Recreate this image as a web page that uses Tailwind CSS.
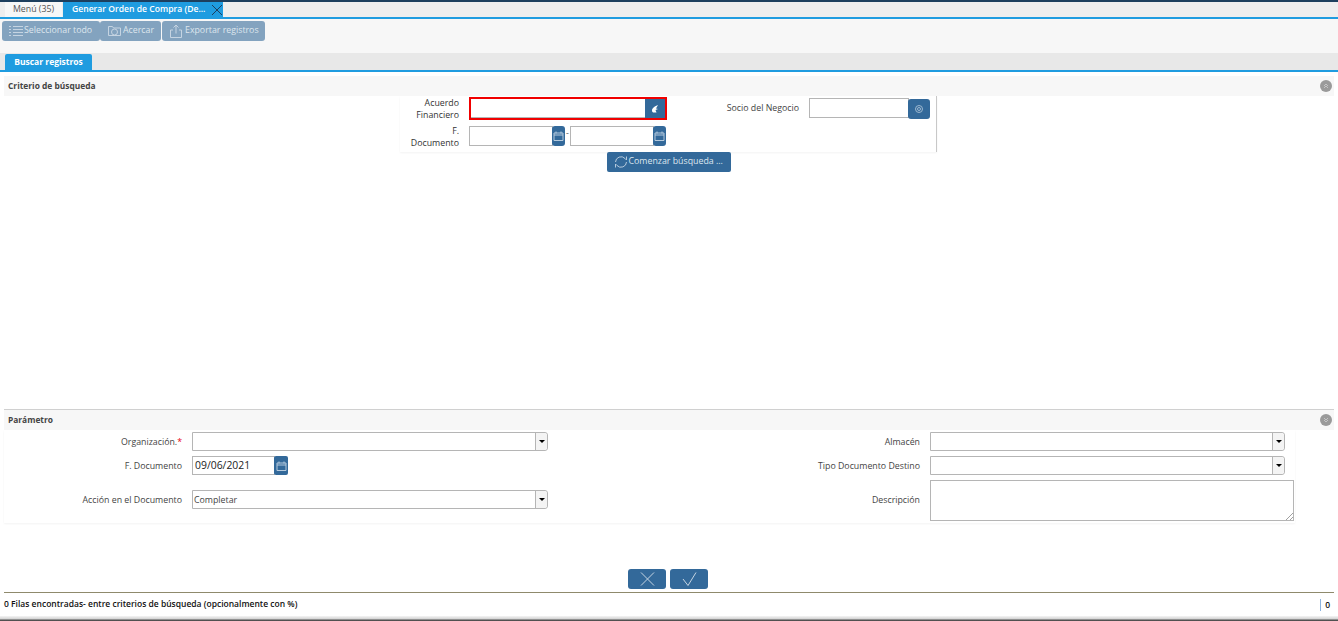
<!DOCTYPE html>
<html lang="en">
<head>
  <meta charset="UTF-8" />
  <title>Generar Orden de Compra</title>
  <script src="https://cdn.jsdelivr.net/npm/@tailwindcss/browser@4"></script>
</head>
<body class="bg-white text-[#333] font-['Open_Sans',sans-serif] text-[8.8px] overflow-hidden">
<div class="w-[1338px] h-[621px] flex flex-col overflow-hidden">

  <!-- Tabs -->
  <div class="h-[19px] shrink-0 bg-[#eeeeee] border-t-2 border-t-[#1d3f5e] border-b-2 border-b-[#1f9ce0] flex pl-[5px]">
    <div class="w-[57px] h-[15px] bg-[#f7f7f7] flex items-center justify-center text-[#555]">Menú (35)</div>
    <div class="w-[160px] h-[15px] ml-[1px] bg-[#1f9ce0] text-white text-[8.6px] font-semibold flex items-center pl-[9px] gap-[6px] whitespace-nowrap">
      <span>Generar Orden de Compra (De...</span>
      <svg class="w-[12px] h-[12px] shrink-0" viewBox="0 0 12 12" fill="none" stroke="#1d3f5e" stroke-width="1"><path d="M1 1l10 10M11 1L1 11"/></svg>
    </div>
  </div>

  <!-- Toolbar -->
  <div class="h-[34px] shrink-0 bg-[#f7f7f7] flex items-start pt-[2px] pl-[2px] text-[#dde6ee]">
    <div class="h-[20px] w-[98px] bg-[#83a3bf] rounded-[3px] flex items-center pl-[7px] gap-[1px]">
      <svg class="w-[14px] h-[12px]" viewBox="0 0 14 12" fill="none" stroke="#c5d4e2"><path d="M4 1.500h10M4 4.500h10M4 7.500h10M4 10.500h10M0 1.500h2M0 4.500h2M0 7.500h2M0 10.500h2"/></svg>
      <span>Seleccionar todo</span>
    </div>
    <div class="h-[20px] w-[61px] bg-[#83a3bf] rounded-[3px] flex items-center pl-[8px] gap-[2px]">
      <svg class="w-[13px] h-[12px]" viewBox="0 0 13 12" fill="none" stroke="#c5d4e2"><path d="M.5 10.500v-9h4l1 1.500h7v7.500z"/><circle cx="6.500" cy="7" r="3"/></svg>
      <span>Acercar</span>
    </div>
    <div class="h-[20px] w-[103px] ml-[1px] bg-[#83a3bf] rounded-[3px] flex items-center pl-[8px] gap-[3px]">
      <svg class="w-[12px] h-[14px]" viewBox="0 0 12 14" fill="none" stroke="#c5d4e2"><path d="M3 6H.5v7.500h11V6H9M6 9.500V1M3.500 3.500L6 1l2.500 2.500"/></svg>
      <span>Exportar registros</span>
    </div>
  </div>

  <!-- Section tab -->
  <div class="h-[19px] shrink-0 bg-[#e8e8e8] border-b-2 border-b-[#1f9ce0] pl-[5px] pt-[1px]">
    <div class="w-[87px] h-[16px] bg-[#1f9ce0] text-white text-[8.500px] font-bold flex items-center justify-center rounded-t-[2px]">Buscar registros</div>
  </div>

  <!-- Criterio de busqueda -->
  <div class="h-[20px] mt-[4px] mx-[4px] shrink-0 bg-[#f7f7f7] flex items-center justify-between pl-[4px] pr-[2px] text-[8.400px] font-bold text-[#444]">
    <span>Criterio de búsqueda</span>
    <span class="w-[12px] h-[12px] rounded-full bg-[#9a9a9a] flex items-center justify-center">
      <svg class="w-[6px] h-[6px]" viewBox="0 0 6 6" fill="none" stroke="#c4c4c4"><path d="M1 3l2-2 2 2M1 5l2-2 2 2"/></svg>
    </span>
  </div>

  <div class="h-[56px] shrink-0 ml-[400px] w-[537px] border-r border-r-[#c8c8c8] shadow-[0_1px_2px_rgba(0,0,0,0.05)] pl-[8px]">
    <div class="flex items-center h-[24px] pt-[1px]">
      <div class="w-[51px] mr-[1px] text-right leading-[12px]">Acuerdo Financiero</div>
      <div class="ml-[9px] w-[198px] h-[23px] border-2 border-[#f00000] flex">
        <div class="flex-1 bg-white border-b border-b-[#b5b5b5]"></div>
        <div class="w-[20px] bg-[#33699a] flex items-center justify-center">
          <svg class="w-[8px] h-[8px]" viewBox="0 0 8 8" fill="#fff"><path d="M7 0C4 1 1 3 1 5.500c0 1 .5 1.500 1 2h3.500L4.500 5 7 4 5 3.500z"/></svg>
        </div>
      </div>
      <div class="w-[122px] ml-[10px] pt-[1px] text-right text-[#444]">Socio del Negocio</div>
      <div class="ml-[10px] w-[100px] h-[20px] border border-[#b5b5b5] -mt-[1px]"></div>
      <div class="w-[22px] h-[20px] -ml-[1px] bg-[#33699a] rounded-[3px] flex items-center justify-center">
        <svg class="w-[8px] h-[8px]" viewBox="0 0 8 8" fill="none" stroke="#9db8d0"><circle cx="4" cy="4" r="3.500"/><circle cx="4" cy="4" r="1.500"/></svg>
      </div>
    </div>
    <div class="flex items-center h-[28px] pt-[3px]">
      <div class="w-[51px] mr-[1px] text-right leading-[12px] pt-[2px]">F. Documento</div>
      <div class="ml-[9px] w-[84px] h-[20px] border border-[#b5b5b5]"></div>
      <div class="w-[13px] h-[20px] -ml-[1px] bg-[#33699a] rounded-[3px] flex items-center justify-center">
        <svg class="w-[11px] h-[10px]" viewBox="0 0 11 10" fill="none" stroke="#b5cadd"><path d="M1 2h9v7.500H1zM1 4h9M3 .5v2M8 .5v2"/></svg>
      </div>
      <span class="w-[5px] text-center -mt-[3px] text-[#555]">-</span>
      <div class="w-[84px] h-[20px] border border-[#b5b5b5]"></div>
      <div class="w-[13px] h-[20px] -ml-[1px] bg-[#33699a] rounded-[3px] flex items-center justify-center">
        <svg class="w-[11px] h-[10px]" viewBox="0 0 11 10" fill="none" stroke="#b5cadd"><path d="M1 2h9v7.500H1zM1 4h9M3 .5v2M8 .5v2"/></svg>
      </div>
    </div>
  </div>

  <div class="h-[257px] shrink-0 flex justify-center items-start pr-[1px]">
    <div class="h-[20px] w-[124px] bg-[#33699a] rounded-[2px] text-[#dde6ee] flex items-center pl-[7px] gap-[1px]">
      <svg class="w-[14px] h-[14px]" viewBox="0 0 14 14" fill="none" stroke="#b5cadd"><path d="M1.500 7a5.500 5.500 0 0 1 9.500-3.500l1.500 1.500V1.500M12.500 7A5.500 5.500 0 0 1 3 10.500L1.500 9v3.500"/></svg>
      <span>Comenzar búsqueda ...</span>
    </div>
  </div>

  <!-- Parametro -->
  <div class="h-[21px] mx-[4px] shrink-0 bg-[#f7f7f7] border-t border-t-[#d0d0d0] flex items-center justify-between pl-[4px] pr-[2px] text-[8.400px] font-bold text-[#444]">
    <span>Parámetro</span>
    <span class="w-[12px] h-[12px] rounded-full bg-[#9a9a9a] flex items-center justify-center">
      <svg class="w-[6px] h-[6px]" viewBox="0 0 6 6" fill="none" stroke="#c4c4c4"><path d="M1 1l2 2 2-2M1 3l2 2 2-2"/></svg>
    </span>
  </div>

  <div class="h-[93px] shrink-0 ml-[4px] w-[1291px] shadow-[0_1px_2px_rgba(0,0,0,0.05)] pt-[2px] text-[#444]">
    <div class="grid grid-cols-[178px_356px_382px_365px] h-[24px]">
      <div class="text-right pt-[4px]">Organización.<span class="text-[#e8000f]">*</span></div>
      <div class="ml-[10px]"><div class="w-[356px] h-[19px] border border-[#b5b5b5] rounded-r-[3px] flex justify-end">
        <div class="w-[12px] bg-[#f4f4f4] border-l border-l-[#b5b5b5] rounded-r-[3px] flex items-center justify-center"><span class="w-0 h-0 border-x-[3px] border-x-transparent border-t-[3px] border-t-black"></span></div>
      </div></div>
      <div class="text-right pt-[4px]">Almacén</div>
      <div class="ml-[10px]"><div class="w-[355px] h-[19px] border border-[#b5b5b5] rounded-r-[3px] flex justify-end">
        <div class="w-[12px] bg-[#f4f4f4] border-l border-l-[#b5b5b5] rounded-r-[3px] flex items-center justify-center"><span class="w-0 h-0 border-x-[3px] border-x-transparent border-t-[3px] border-t-black"></span></div>
      </div></div>
    </div>
    <div class="grid grid-cols-[178px_356px_382px_365px] h-[24px]">
      <div class="text-right pt-[4px]">F. Documento</div>
      <div class="ml-[10px] flex">
        <div class="w-[83px] h-[19px] border border-[#b5b5b5] pl-[2px] pt-[1px] flex items-center text-[10.400px] text-[#222]">09/06/2021</div>
        <div class="w-[14px] h-[19px] -ml-[1px] bg-[#33699a] rounded-[2px] flex items-center justify-center">
          <svg class="w-[11px] h-[10px]" viewBox="0 0 11 10" fill="none" stroke="#b5cadd"><path d="M1 2h9v7.500H1zM1 4h9M3 .5v2M8 .5v2"/></svg>
        </div>
      </div>
      <div class="text-right pt-[4px]">Tipo Documento Destino</div>
      <div class="ml-[10px]"><div class="w-[355px] h-[19px] border border-[#b5b5b5] rounded-r-[3px] flex justify-end">
        <div class="w-[12px] bg-[#f4f4f4] border-l border-l-[#b5b5b5] rounded-r-[3px] flex items-center justify-center"><span class="w-0 h-0 border-x-[3px] border-x-transparent border-t-[3px] border-t-black"></span></div>
      </div></div>
    </div>
    <div class="grid grid-cols-[178px_356px_382px_374px]">
      <div class="text-right pt-[14px]">Acción en el Documento</div>
      <div class="ml-[10px] pt-[10px]"><div class="w-[356px] h-[19px] border border-[#b5b5b5] rounded-r-[3px] flex justify-between">
        <span class="pl-[1px] leading-[18px]">Completar</span>
        <div class="w-[12px] bg-[#f4f4f4] border-l border-l-[#b5b5b5] rounded-r-[3px] flex items-center justify-center"><span class="w-0 h-0 border-x-[3px] border-x-transparent border-t-[3px] border-t-black"></span></div>
      </div></div>
      <div class="text-right pt-[14px]">Descripción</div>
      <div class="ml-[10px]"><div class="relative w-[364px] h-[41px] border border-[#b5b5b5]">
        <svg class="absolute right-0 bottom-0 w-[8px] h-[8px]" viewBox="0 0 8 8" fill="none" stroke="#777" stroke-width=".7"><path d="M1 8l7-7M5 8l3-3"/></svg>
      </div></div>
    </div>
  </div>

  <!-- Accion -->
  <div class="h-[24px] mt-[46px] shrink-0 flex justify-center items-start gap-[4px] pr-[2px] mx-[4px] border-b border-b-[#8f8a6c]">
    <div class="w-[38px] h-[20px] bg-[#33699a] rounded-[3px] flex items-center justify-center">
      <svg class="w-[15px] h-[14px]" viewBox="0 0 15 14" fill="none" stroke="#c5d4e2"><path d="M1 .5l13 13M14 .5l-13 13"/></svg>
    </div>
    <div class="w-[38px] h-[20px] bg-[#33699a] rounded-[3px] flex items-center justify-center">
      <svg class="w-[15px] h-[14px]" viewBox="0 0 15 14" fill="none" stroke="#c5d4e2"><path d="M1 7l5 6.500L14 .5"/></svg>
    </div>
  </div>

  <!-- Status -->
  <div class="h-[23px] shrink-0 flex items-center justify-between pl-[4px] pr-[8px] text-[8.500px] font-semibold text-[#111]">
    <span>0 Filas encontradas- entre criterios de búsqueda (opcionalmente con %)</span>
    <span class="border-l border-l-[#8cb4e0] pl-[4px] h-[12px] leading-[12px]">0</span>
  </div>
  <div class="flex-1 bg-gradient-to-b from-[#f5f5f5] via-[#d8d8d8] to-[#333]"></div>
</div>
</body>
</html>
